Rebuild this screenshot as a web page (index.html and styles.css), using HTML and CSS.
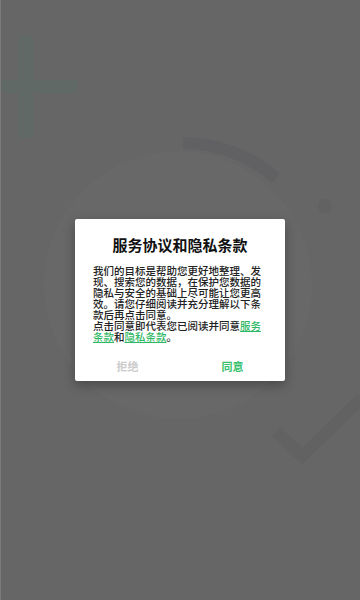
FILE: index.html
```html
<!DOCTYPE html>
<html lang="zh">
<head>
<meta charset="utf-8">
<link rel="stylesheet" href="styles.css">
</head>
<body>
<div class="screen">
  <svg class="backdrop" width="360" height="600" viewBox="0 0 360 600">
    <circle cx="178" cy="285" r="134" fill="#686868"/>
    <path d="M183 143 A142 142 0 0 1 276 178" fill="none" stroke="#616163" stroke-width="12"/>
    <circle cx="325" cy="206" r="7" fill="#626262"/>
    <rect x="18" y="35" width="15" height="103" rx="3" fill="#616966"/>
    <rect x="0" y="80" width="78" height="13" rx="3" fill="#616966"/>
    <path d="M276 432 L302 456 L362 398" fill="none" stroke="#626262" stroke-width="12"/>
    <rect x="0" y="0" width="1" height="600" fill="#7a7a7a"/>
  </svg>
  <div class="dialog">
    <h1 class="title">服务协议和隐私条款</h1>
    <p class="body">我们的目标是帮助您更好地整理、发现、搜索您的数据，在保护您数据的隐私与安全的基础上尽可能让您更高效。请您仔细阅读并充分理解以下条款后再点击同意。<br>点击同意即代表您已阅读并同意<a class="link">服务条款</a>和<a class="link">隐私条款</a>。</p>
    <div class="actions">
      <span class="btn btn-reject">拒绝</span>
      <span class="btn btn-agree">同意</span>
    </div>
  </div>
</div>
</body>
</html>
```

FILE: styles.css
```css
html, body {
  margin: 0;
  padding: 0;
}
body {
  width: 360px;
  height: 600px;
  overflow: hidden;
  background: #666666;
  font-family: "Noto Sans CJK SC", "Noto Sans", sans-serif;
}
.screen {
  position: relative;
  width: 360px;
  height: 600px;
  display: flex;
  align-items: center;
  justify-content: center;
}
.backdrop {
  position: absolute;
  left: 0;
  top: 0;
}
.dialog {
  position: relative;
  width: 210px;
  height: 162px;
  box-sizing: border-box;
  background: #ffffff;
  border-radius: 2px;
  box-shadow: 0 4px 12px rgba(0, 0, 0, 0.3);
  padding: 16px 0 0;
  display: flex;
  flex-direction: column;
}
.title {
  margin: 0;
  font-size: 15px;
  line-height: 20px;
  font-weight: 700;
  color: #111111;
  text-align: center;
}
.body {
  margin: 9.5px 18px 0;
  font-size: 10.5px;
  line-height: 11px;
  font-weight: 500;
  color: #222222;
}
.link {
  color: #2fb866;
  text-decoration: underline;
}
.actions {
  margin-top: auto;
  height: 30px;
  display: flex;
}
.btn {
  flex: 1;
  display: flex;
  align-items: center;
  justify-content: center;
  font-size: 11px;
  font-weight: 700;
}
.btn-reject {
  color: #cccccc;
}
.btn-agree {
  color: #33c06a;
}
```
